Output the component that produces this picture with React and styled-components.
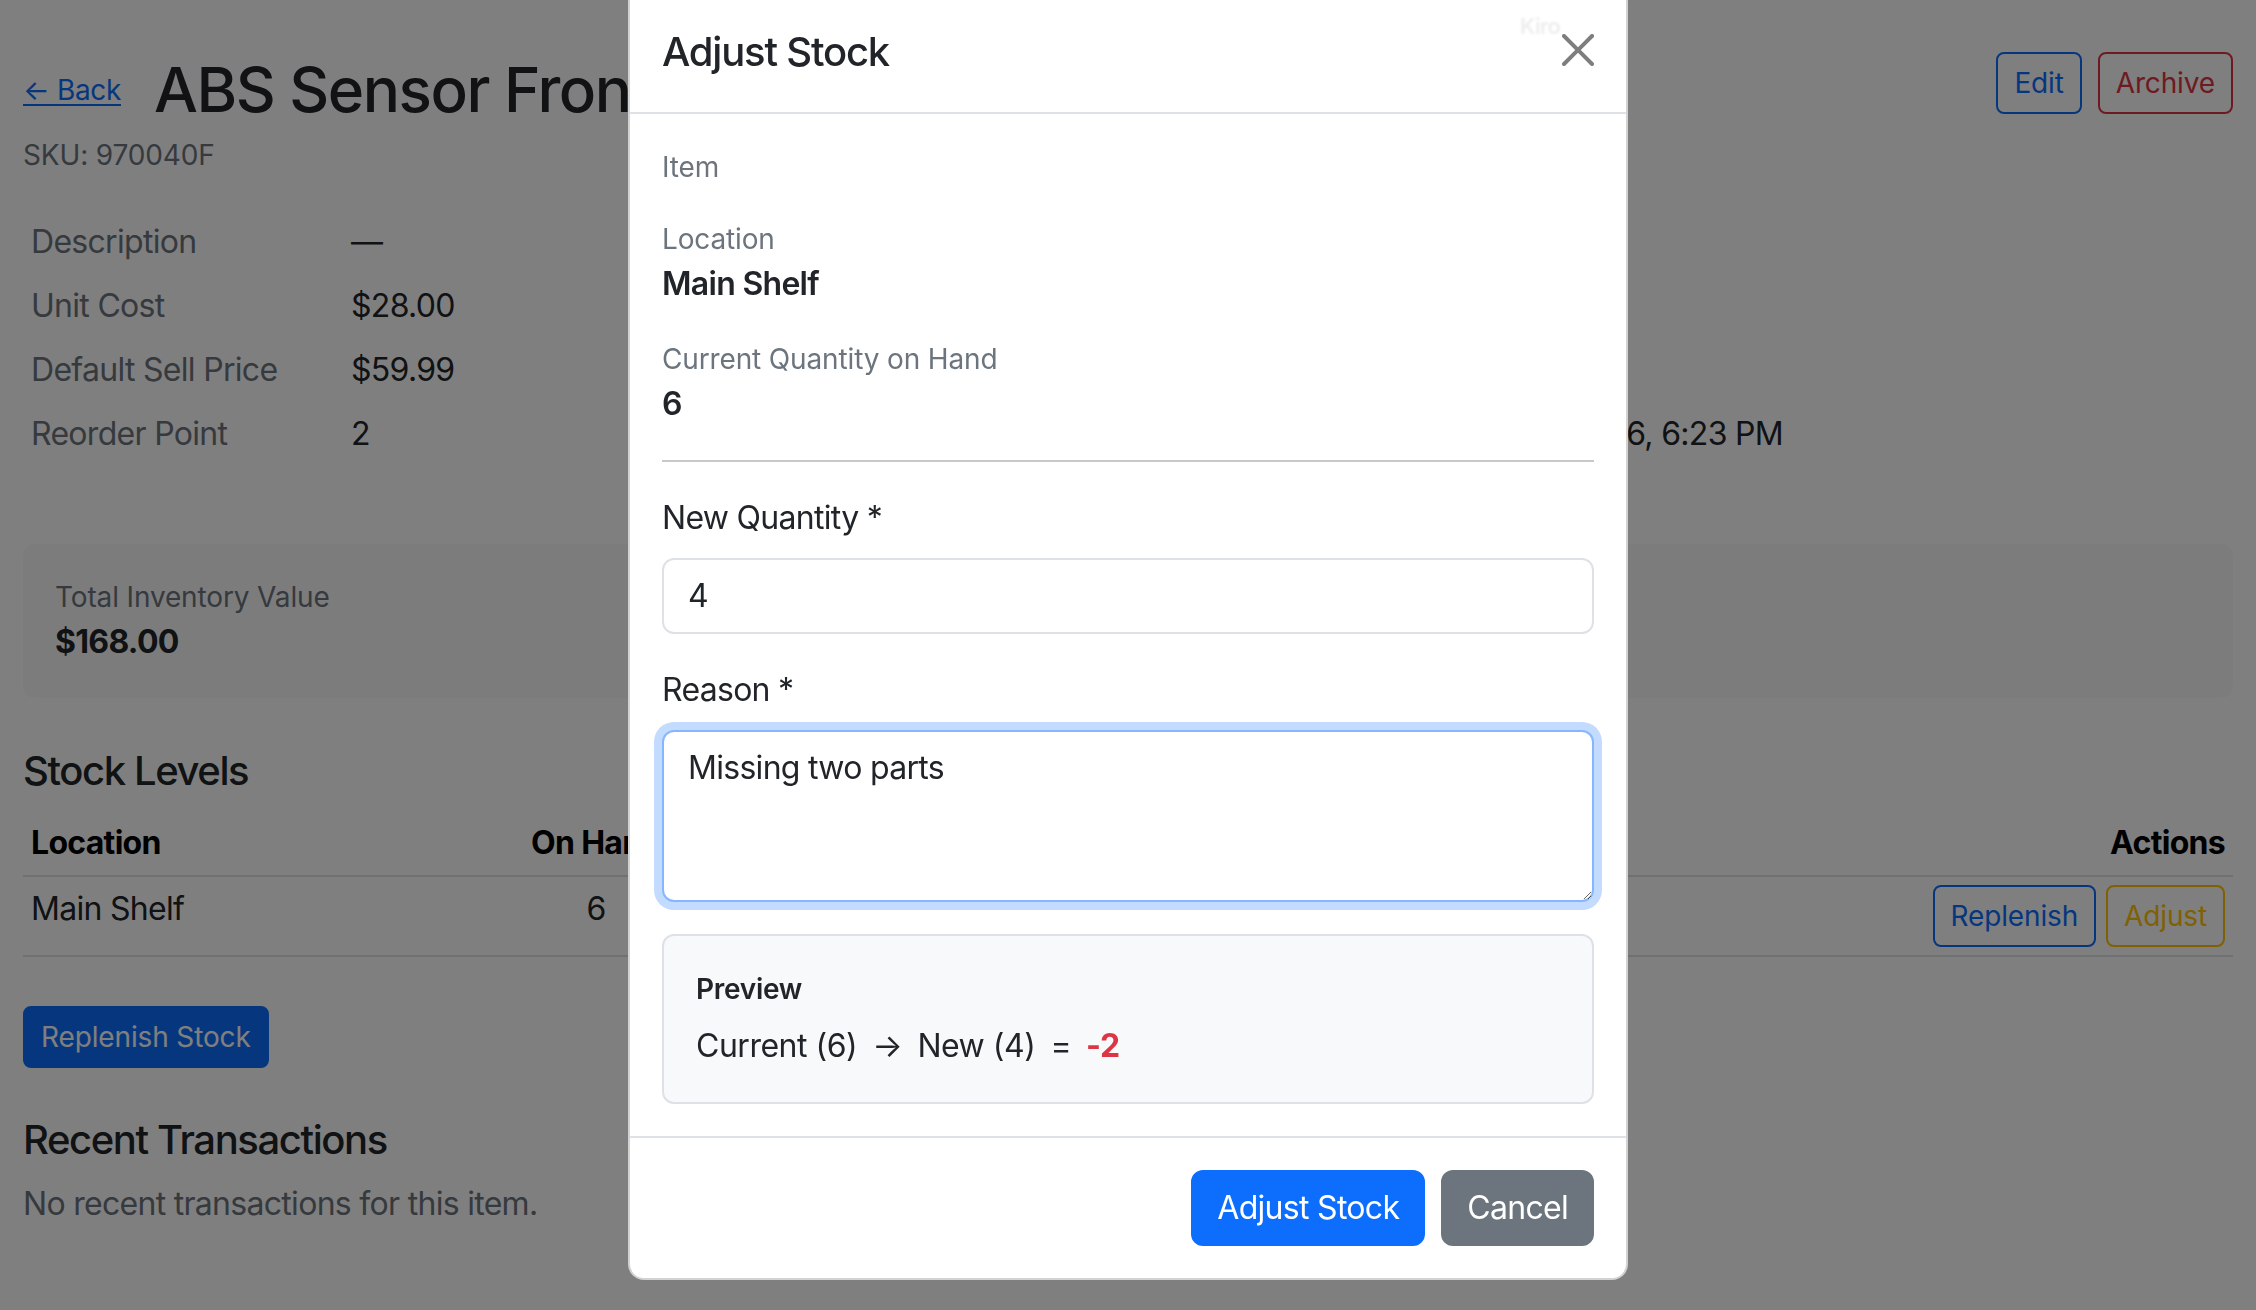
import React from "react";
import styled, { createGlobalStyle, css } from "styled-components";

const C = {
  primary: "#0d6efd",
  danger: "#dc3545",
  warning: "#ffc107",
  secondary: "#6c757d",
  body: "#212529",
  muted: "#6c757d",
  border: "#dee2e6",
  light: "#f8f9fa",
};

const Global = createGlobalStyle`
  *, *::before, *::after { box-sizing: border-box; }
  html, body { margin: 0; padding: 0; overflow: hidden; }
  body {
    font-family: Inter, "Liberation Sans", Arial, sans-serif;
    font-size: 32px;
    line-height: 1.5;
    letter-spacing: -0.022em;
    color: ${C.body};
    background: #fff;
    width: 2256px;
    height: 1310px;
  }
`;

/* ---------- page (behind the modal) ---------- */

const Page = styled.main`
  padding: 52px 23px 0;
  display: flex;
  flex-direction: column;
`;

const HeaderRow = styled.header`
  display: flex;
  justify-content: space-between;
  align-items: flex-start;
`;

const TitleBlock = styled.div`
  display: flex;
  flex-direction: column;
`;

const TitleLine = styled.div`
  display: flex;
  align-items: center;
  gap: 33px;
`;

const BackLink = styled.a`
  font-size: 28px;
  line-height: 42px;
  letter-spacing: -0.012em;
  color: ${C.primary};
  text-decoration: underline;
  text-underline-offset: 4px;
`;

const Title = styled.h2`
  margin: 0;
  font-size: 62px;
  font-weight: 500;
  line-height: 75px;
  letter-spacing: -0.024em;
  white-space: nowrap;
`;

const Sku = styled.p`
  margin: 7px 0 0;
  font-size: 28px;
  line-height: 42px;
  letter-spacing: -0.005em;
  color: ${C.muted};
`;

const ButtonGroup = styled.div`
  display: flex;
  gap: 16px;
`;

const variantColor = (v) => C[v] || C.primary;

const OutlineButton = styled.button`
  font-family: inherit;
  letter-spacing: -0.005em;
  font-size: 28px;
  line-height: 42px;
  padding: 8px 16px;
  border-radius: 8px;
  background: transparent;
  border: 2px solid ${(p) => variantColor(p.$variant)};
  color: ${(p) => variantColor(p.$variant)};
`;

const SolidButton = styled.button`
  font-family: inherit;
  border: 2px solid ${(p) => variantColor(p.$variant)};
  background: ${(p) => variantColor(p.$variant)};
  color: #fff;
  ${(p) =>
    p.$size === "sm"
      ? css`
          font-size: 28px;
          line-height: 42px;
          letter-spacing: -0.005em;
          padding: 8px 16px;
          border-radius: 8px;
        `
      : css`
          font-size: 32px;
          line-height: 48px;
          letter-spacing: -0.022em;
          padding: 12px 24px;
          border-radius: 12px;
        `}
`;

const DetailsGrid = styled.section`
  margin-top: 34px;
  display: grid;
  grid-template-columns: 1fr 1fr;
  column-gap: 48px;
`;

const DetailList = styled.dl`
  margin: 0;
  display: grid;
  grid-template-columns: ${(p) => p.$labelWidth || 320}px 1fr;
`;

const DetailLabel = styled.dt`
  padding: 8px;
  line-height: 48px;
  color: ${C.muted};
`;

const DetailValue = styled.dd`
  margin: 0;
  padding: 8px;
  line-height: 48px;
  white-space: nowrap;
`;

const SummaryCard = styled.section`
  margin-top: 78px;
  background: ${C.light};
  border-radius: 12px;
  padding: 32px;
  display: flex;
  flex-direction: column;
`;

const SmallMuted = styled.span`
  font-size: 28px;
  line-height: 42px;
  letter-spacing: -0.005em;
  color: ${C.muted};
`;

const BigValue = styled.strong`
  font-size: 32px;
  line-height: 48px;
  font-weight: 700;
`;

const SectionTitle = styled.h5`
  margin: ${(p) => p.$top}px 0 16px;
  font-size: 40px;
  font-weight: 500;
  line-height: 48px;
  letter-spacing: -0.035em;
`;

const StockTable = styled.div`
  display: flex;
  flex-direction: column;
`;

const TableRow = styled.div`
  display: grid;
  grid-template-columns: 493px 160px 300px 300px 1fr 301px;
  border-bottom: 2px solid ${C.border};
  font-weight: ${(p) => (p.$head ? 700 : 400)};
  color: ${(p) => (p.$head ? "#000" : C.body)};
`;

const Cell = styled.div`
  padding: 8px;
  line-height: 48px;
  text-align: ${(p) => p.$align || "left"};
  white-space: nowrap;
  display: ${(p) => (p.$actions ? "flex" : "block")};
  justify-content: flex-end;
  gap: 10px;
`;

const PrimaryRow = styled.div`
  margin-top: 49px;
  display: flex;
`;

const Paragraph = styled.p`
  margin: 0;
  line-height: 48px;
  color: ${C.muted};
`;

/* ---------- modal ---------- */

const Backdrop = styled.div`
  position: fixed;
  inset: 0;
  background: rgba(0, 0, 0, 0.5);
  z-index: 10;
`;

const ModalLayer = styled.div`
  position: fixed;
  inset: 0;
  z-index: 20;
  display: flex;
  justify-content: center;
  align-items: flex-start;
`;

const ModalContent = styled.div`
  margin-top: -14px;
  width: 1000px;
  background: #fff;
  border: 2px solid rgba(0, 0, 0, 0.175);
  border-radius: 16px;
  display: flex;
  flex-direction: column;
`;

const ModalHeader = styled.div`
  padding: 32px;
  display: flex;
  align-items: center;
  justify-content: space-between;
  border-bottom: 2px solid ${C.border};
`;

const ModalTitle = styled.h5`
  margin: 2px 0 -2px;
  font-size: 40px;
  font-weight: 500;
  line-height: 60px;
  letter-spacing: -0.03em;
`;

const CloseButton = styled.button`
  width: 48px;
  height: 48px;
  padding: 8px;
  margin: -16px -8px -16px auto;
  border: 0;
  background: transparent;
  opacity: 0.5;
  display: flex;
  align-items: center;
  justify-content: center;
`;

const Watermark = styled.div`
  position: fixed;
  left: 1520px;
  top: 10px;
  z-index: 30;
  font-size: 22px;
  font-weight: 600;
  color: #eeeeee;
  filter: blur(1px);
`;

const ModalBody = styled.div`
  padding: 32px;
  display: flex;
  flex-direction: column;
`;

const InfoBlock = styled.div`
  margin-bottom: ${(p) => (p.$last ? 0 : 30)}px;
  display: flex;
  flex-direction: column;
`;

const InfoValue = styled.div`
  font-weight: 600;
  line-height: 48px;
`;

const Divider = styled.hr`
  margin: 32px 0;
  border: 0;
  border-top: 2px solid ${C.body};
  opacity: 0.25;
`;

const Field = styled.div`
  margin-bottom: 32px;
  display: flex;
  flex-direction: column;
`;

const FieldLabel = styled.label`
  margin-bottom: 16px;
  line-height: 48px;
`;

const controlStyles = css`
  font-family: inherit;
  letter-spacing: inherit;
  font-size: 32px;
  line-height: 48px;
  color: ${C.body};
  padding: 12px 24px;
  border-radius: 12px;
  border: 2px solid ${C.border};
  background: #fff;
  width: 100%;
  outline: none;
`;

const TextInput = styled.input`
  ${controlStyles}
`;

const TextArea = styled.textarea`
  ${controlStyles}
  resize: vertical;
  border-color: #86b7fe;
  box-shadow: 0 0 0 8px rgba(13, 110, 253, 0.25);
`;

const PreviewBox = styled.div`
  background: ${C.light};
  border: 2px solid ${C.border};
  border-radius: 12px;
  padding: 32px;
  display: flex;
  flex-direction: column;
`;

const PreviewLabel = styled.div`
  font-size: 28px;
  line-height: 42px;
  font-weight: 600;
  letter-spacing: -0.01em;
  margin-bottom: 12px;
`;

const PreviewLine = styled.div`
  display: flex;
  align-items: center;
  line-height: 48px;
  letter-spacing: -0.015em;
`;

const Op = styled.span`
  margin: 0 ${(p) => p.$space || 16}px;
`;

const Delta = styled.span`
  font-weight: 700;
  color: ${C.danger};
`;

const ModalFooter = styled.div`
  border-top: 2px solid ${C.border};
  padding: 24px;
  display: flex;
  justify-content: flex-end;
  & > button {
    margin: 8px;
  }
`;

const CloseIcon = () => (
  <svg width="32" height="32" viewBox="0 0 16 16" aria-hidden="true">
    <path
      fill="#000"
      d="M.293.293a1 1 0 0 1 1.414 0L8 6.586 14.293.293a1 1 0 1 1 1.414 1.414L9.414 8l6.293 6.293a1 1 0 0 1-1.414 1.414L8 9.414l-6.293 6.293a1 1 0 0 1-1.414-1.414L6.586 8 .293 1.707a1 1 0 0 1 0-1.414"
    />
  </svg>
);

const leftDetails = [
  ["Description", "—"],
  ["Unit Cost", "$28.00"],
  ["Default Sell Price", "$59.99"],
  ["Reorder Point", "2"],
];

const rightDetails = [
  ["Category", "Sensors"],
  ["Vendor", "—"],
  ["Unit", "each"],
  ["Created", "Jan 6, 2026, 6:23 PM"],
];

const Details = ({ rows, labelWidth }) => (
  <DetailList $labelWidth={labelWidth}>
    {rows.map(([k, v]) => (
      <React.Fragment key={k}>
        <DetailLabel>{k}</DetailLabel>
        <DetailValue>{v}</DetailValue>
      </React.Fragment>
    ))}
  </DetailList>
);

export default function App() {
  return (
    <>
      <Global />
      <Page>
        <HeaderRow>
          <TitleBlock>
            <TitleLine>
              <BackLink href="#">← Back</BackLink>
              <Title>ABS Sensor Front Left</Title>
            </TitleLine>
            <Sku>SKU: 970040F</Sku>
          </TitleBlock>
          <ButtonGroup>
            <OutlineButton $variant="primary">Edit</OutlineButton>
            <OutlineButton $variant="danger">Archive</OutlineButton>
          </ButtonGroup>
        </HeaderRow>

        <DetailsGrid>
          <Details rows={leftDetails} />
          <Details rows={rightDetails} labelWidth={313} />
        </DetailsGrid>

        <SummaryCard>
          <SmallMuted>Total Inventory Value</SmallMuted>
          <BigValue>$168.00</BigValue>
        </SummaryCard>

        <SectionTitle $top={49}>Stock Levels</SectionTitle>
        <StockTable>
          <TableRow $head>
            <Cell>Location</Cell>
            <Cell $align="center">On Hand</Cell>
            <Cell $align="center">Reorder</Cell>
            <Cell $align="center">Status</Cell>
            <Cell />
            <Cell $align="right">Actions</Cell>
          </TableRow>
          <TableRow>
            <Cell>Main Shelf</Cell>
            <Cell $align="center">6</Cell>
            <Cell $align="center">2</Cell>
            <Cell $align="center">OK</Cell>
            <Cell />
            <Cell $actions>
              <OutlineButton $variant="primary">Replenish</OutlineButton>
              <OutlineButton $variant="warning">Adjust</OutlineButton>
            </Cell>
          </TableRow>
        </StockTable>

        <PrimaryRow>
          <SolidButton $variant="primary" $size="sm">
            Replenish Stock
          </SolidButton>
        </PrimaryRow>

        <SectionTitle $top={48}>Recent Transactions</SectionTitle>
        <Paragraph>No recent transactions for this item.</Paragraph>
      </Page>

      <Backdrop />
      <ModalLayer>
        <ModalContent role="dialog">
          <ModalHeader>
            <ModalTitle>Adjust Stock</ModalTitle>
            <CloseButton aria-label="Close">
              <CloseIcon />
            </CloseButton>
          </ModalHeader>
          <ModalBody>
            <InfoBlock>
              <SmallMuted>Item</SmallMuted>
              <InfoValue />
            </InfoBlock>
            <InfoBlock>
              <SmallMuted>Location</SmallMuted>
              <InfoValue>Main Shelf</InfoValue>
            </InfoBlock>
            <InfoBlock $last>
              <SmallMuted>Current Quantity on Hand</SmallMuted>
              <InfoValue>6</InfoValue>
            </InfoBlock>
            <Divider />
            <Field>
              <FieldLabel>New Quantity *</FieldLabel>
              <TextInput type="text" defaultValue="4" />
            </Field>
            <Field>
              <FieldLabel>Reason *</FieldLabel>
              <TextArea rows={3} defaultValue="Missing two parts" />
            </Field>
            <PreviewBox>
              <PreviewLabel>Preview</PreviewLabel>
              <PreviewLine>
                <span>Current (6)</span>
                <Op $space={15}>→</Op>
                <span>New (4)</span>
                <Op $space={15}>=</Op>
                <Delta>-2</Delta>
              </PreviewLine>
            </PreviewBox>
          </ModalBody>
          <ModalFooter>
            <SolidButton $variant="primary">Adjust Stock</SolidButton>
            <SolidButton $variant="secondary">Cancel</SolidButton>
          </ModalFooter>
        </ModalContent>
      </ModalLayer>
      <Watermark>Kiro</Watermark>
    </>
  );
}
